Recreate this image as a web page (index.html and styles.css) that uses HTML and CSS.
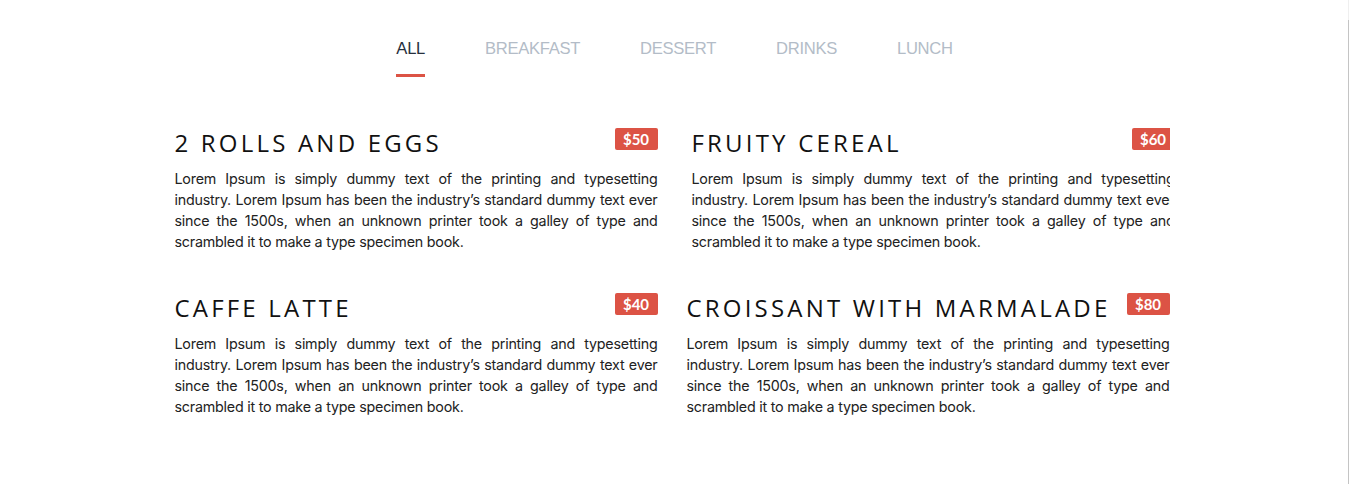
FILE: index.html
```html
<!DOCTYPE html>
<html lang="en">
<head>
<meta charset="utf-8">
<title>Menu</title>
<link rel="stylesheet" href="styles.css">
</head>
<body>
<div class="page">
  <div class="wrap">
    <nav class="tabs">
      <a class="tab active">ALL</a>
      <a class="tab">BREAKFAST</a>
      <a class="tab">DESSERT</a>
      <a class="tab">DRINKS</a>
      <a class="tab">LUNCH</a>
    </nav>
    <div class="menu">
      <div class="item">
        <div class="item-head">
          <h3 class="item-title">2 ROLLS AND EGGS</h3>
          <span class="price">$50</span>
        </div>
        <p class="item-text">Lorem Ipsum is simply dummy text of the printing and typesetting industry. Lorem Ipsum has been the industry’s standard dummy text ever since the 1500s, when an unknown printer took a galley of type and scrambled it to make a type specimen book.</p>
      </div>
      <div class="item offset">
        <div class="item-head">
          <h3 class="item-title">FRUITY CEREAL</h3>
          <span class="price">$60</span>
        </div>
        <p class="item-text">Lorem Ipsum is simply dummy text of the printing and typesetting industry. Lorem Ipsum has been the industry’s standard dummy text ever since the 1500s, when an unknown printer took a galley of type and scrambled it to make a type specimen book.</p>
      </div>
      <div class="item">
        <div class="item-head">
          <h3 class="item-title">CAFFE LATTE</h3>
          <span class="price">$40</span>
        </div>
        <p class="item-text">Lorem Ipsum is simply dummy text of the printing and typesetting industry. Lorem Ipsum has been the industry’s standard dummy text ever since the 1500s, when an unknown printer took a galley of type and scrambled it to make a type specimen book.</p>
      </div>
      <div class="item">
        <div class="item-head">
          <h3 class="item-title">CROISSANT WITH MARMALADE</h3>
          <span class="price">$80</span>
        </div>
        <p class="item-text">Lorem Ipsum is simply dummy text of the printing and typesetting industry. Lorem Ipsum has been the industry’s standard dummy text ever since the 1500s, when an unknown printer took a galley of type and scrambled it to make a type specimen book.</p>
      </div>
    </div>
  </div>
</div>
</body>
</html>
```

FILE: styles.css
```css
html, body {
  margin: 0;
  padding: 0;
  background: #fff;
}

.page {
  width: 1349px;
  height: 484px;
  box-sizing: border-box;
  background:
    linear-gradient(#efefef, #efefef) right top / 1px 20px no-repeat,
    linear-gradient(#c4c4c4, #c4c4c4) right 20px / 1px 100% no-repeat,
    #fff;
  overflow: hidden;
}

.wrap {
  width: 1000px;
  margin: 0 auto;
}

.tabs {
  display: flex;
  justify-content: center;
  gap: 60px;
  padding-top: 39px;
}

.tab {
  font-family: "Liberation Sans", Arial, sans-serif;
  font-size: 16.6px;
  line-height: 20px;
  color: #b3bcc7;
  padding-bottom: 15px;
  border-bottom: 3px solid transparent;
  letter-spacing: -0.3px;
}

.tab.active {
  color: #27303d;
  border-bottom-color: #dc5345;
}

.menu {
  width: 995px;
  margin-top: 51px;
  display: grid;
  grid-template-columns: 483px 483px;
  column-gap: 29px;
  row-gap: 41px;
  overflow: hidden;
}

.item {
  width: 483px;
}

.item.offset {
  margin-left: 5px;
}

.item-head {
  display: flex;
  justify-content: space-between;
  align-items: flex-start;
}

.item-title {
  margin: -2px 0;
  font-family: "Open Sans", sans-serif;
  font-weight: 400;
  font-size: 24px;
  line-height: 33px;
  letter-spacing: 3.2px;
  color: #111;
}

.price {
  flex: none;
  width: 43px;
  height: 22px;
  line-height: 22px;
  text-align: center;
  border-radius: 2px;
  background: #dc5345;
  color: #fff;
  font-family: "Lato", sans-serif;
  font-weight: 700;
  font-size: 15px;
}

.item-text {
  margin: 11px 0 0;
  font-family: "Inter", sans-serif;
  font-size: 14.3px;
  line-height: 21px;
  letter-spacing: -0.22px;
  text-align: justify;
  color: #222;
}
```
